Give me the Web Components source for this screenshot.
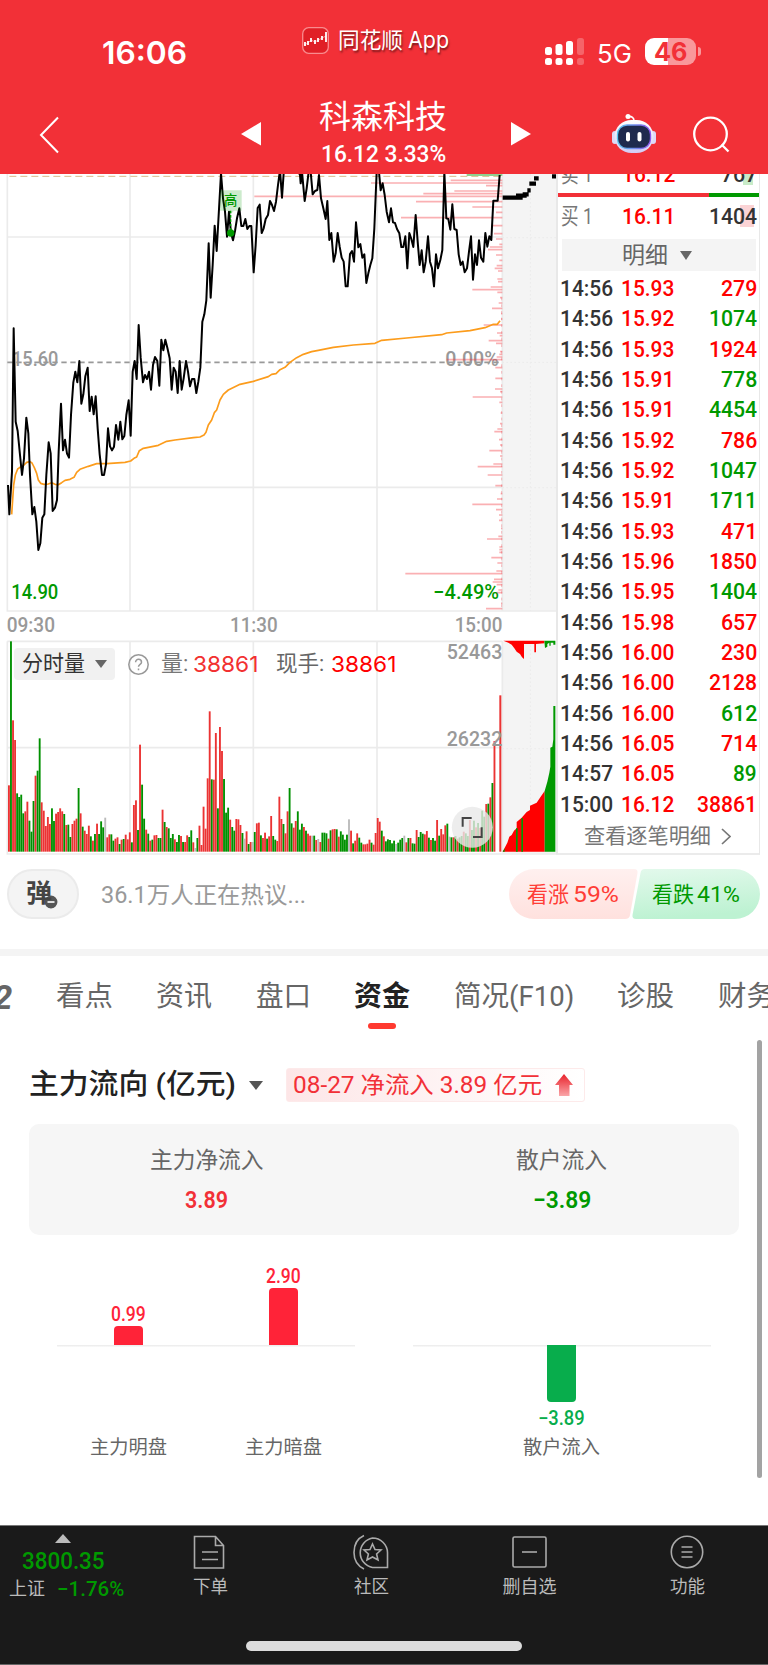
<!DOCTYPE html>
<html lang="zh-CN">
<head>
<meta charset="utf-8">
<title>科森科技</title>
<style>
  body {
    margin: 0;
    width: 768px;
    height: 1665px;
    overflow: hidden;
    background: #fff;
    color: #333;
    font-family: Roboto, "Noto Sans CJK SC", sans-serif;
    line-height: 1;
    --up: #ff0000;
    --down: #009900;
    --head: #f23037;
  }
</style>
</head>
<body>
<stock-page></stock-page>

<script>
class BaseElement extends HTMLElement {
    constructor() {
        super();
        this.attachShadow({ mode: 'open' });
        this.shadowRoot.innerHTML = this.template();
    }
}

// Text squeezed or stretched to the width given in "w"
class FitText extends BaseElement {
    template() {
        return `
        <style>
            :host { display: inline-block; flex: none; white-space: nowrap; }
            span { display: inline-block; transform-origin: 0 50%; }
        </style>
        <span><slot></slot></span>`;
    }
    connectedCallback() {
        let w = Number(this.getAttribute('w'));
        let span = this.shadowRoot.querySelector('span');
        this.style.width = w + 'px';
        span.style.transform = 'scaleX(' + w / span.offsetWidth + ')';
    }
}

class StatusBar extends BaseElement {
    template() {
        return `
        <style>
            :host { display: flex; height: 90px; color: #fff; font-family: Inter, "Noto Sans CJK SC", sans-serif; }
            .time { margin: 36.5px 0 0 102px; font-size: 31px; font-weight: 600; }
            .app { display: flex; margin: 27px 0 0 115px; text-shadow: 1px 2px 2px rgba(0,0,0,.5); font-size: 23px; }
            .app fit-text { margin-top: 2px; }
            .app .han { margin-left: 9px; font-size: 22px; }
            .app .lat { margin-left: 5px; }
            .sig { margin: 38px 0 0 96px; }
            .net { margin: 42px 0 0 13px; font-size: 25px; }
            .bat { margin: 38px 0 0 13px; width: 51px; height: 27px; border-radius: 9px; display: flex; justify-content: center; align-items: center;
                background: linear-gradient(90deg, #fff 23px, #f9989b 23px); color: var(--head); font-size: 26px; font-weight: 700; }
            .cap { width: 3px; height: 9px; margin: 47px 0 0 2px; border-radius: 0 3px 3px 0; background: #f9989b; }
        </style>
        <fit-text class="time" w="85">16:06</fit-text>
        <div class="app">
            <svg width="27" height="27" viewBox="0 0 27 27">
                <rect x=".7" y=".7" width="25.6" height="25.6" rx="6" fill="#e01f26" stroke="#f98b8e" stroke-width="1.3"/>
                <path d="M3 15v4M6 14v4M9 11v4M13 13v4M16 11v4M20 9v4M24 5v10" stroke="#fff" stroke-width="1.8"/>
                <path d="M2 18L6 16 9 13 13 15 20 11 24 9" fill="none" stroke="#fff" stroke-width=".5"/>
            </svg>
            <fit-text class="han" w="65">同花顺</fit-text><fit-text class="lat" w="41">App</fit-text>
        </div>
        <svg class="sig" width="39" height="28" fill="#fff">
            <rect x="0" y="9" width="7" height="8" rx="2.5"/><rect x="10.5" y="6" width="7" height="11" rx="2.5"/>
            <rect x="21" y="3" width="7" height="14" rx="2.5"/><rect x="32" y="0" width="7" height="17" rx="2.5" opacity=".25"/>
            <rect x="0" y="20" width="7" height="7" rx="2.5"/><rect x="10.5" y="20" width="7" height="7" rx="2.5"/>
            <rect x="21" y="20" width="7" height="7" rx="2.5"/><rect x="32" y="20" width="7" height="7" rx="2.5" opacity=".25"/>
        </svg>
        <fit-text class="net" w="35">5G</fit-text>
        <div class="bat"><fit-text w="33">46</fit-text></div><div class="cap"></div>`;
    }
}

class NavBar extends BaseElement {
    template() {
        return `
        <style>
            :host { display: flex; height: 84px; color: #fff; }
            svg { flex: none; }
            .title { display: flex; flex-direction: column; align-items: center; width: 130px; margin: 11px 0 0 57px; font-size: 32px; }
            .title .sub { font-size: 24.5px; font-weight: 500; margin-top: 9px; }
        </style>
        <svg width="20" height="38" style="margin: 26px 0 0 39px" fill="none" stroke="#fff" stroke-width="2"><path d="M19 1.500L2 19 19 36.500"/></svg>
        <svg width="20" height="24" style="margin: 32px 0 0 182px" fill="#fff"><path d="M20 0V23.500L0 12Z"/></svg>
        <div class="title"><fit-text w="128">科森科技</fit-text><fit-text class="sub" w="125">16.12 3.33%</fit-text></div>
        <svg width="20" height="24" style="margin: 32px 0 0 63px" fill="#fff"><path d="M0 0V23.500L20 12Z"/></svg>
        <svg width="44" height="42" viewBox="0 0 44 42" style="margin: 22px 0 0 81px">
            <defs>
                <linearGradient id="shell" x2="0" y2="1"><stop offset="0" stop-color="#fff"/><stop offset="1" stop-color="#d2cdf5"/></linearGradient>
                <linearGradient id="rim" x2="1"><stop offset="0" stop-color="#58c4ee"/><stop offset="1" stop-color="#8d58ee"/></linearGradient>
            </defs>
            <circle cx="16" cy="4.500" r="2.500" fill="#fff"/><path d="M16 4.500Q22 4 22 9" fill="none" stroke="#fff" stroke-width="1.700"/>
            <rect x="0" y="19" width="6" height="13" rx="3" fill="#dcd9f7"/><rect x="38" y="19" width="6" height="13" rx="3" fill="#dcd9f7"/>
            <rect x="2.500" y="8" width="39" height="33" rx="17" fill="url(#shell)"/>
            <rect x="5.500" y="13" width="33" height="23.500" rx="9.500" fill="#1f2a4e" stroke="url(#rim)" stroke-width="1.300"/>
            <rect x="14" y="20" width="4" height="9.500" rx="2" fill="#fff"/><rect x="25.500" y="20" width="4" height="9.500" rx="2" fill="#fff"/>
        </svg>
        <svg width="38" height="38" style="margin: 25px 0 0 36px" fill="none" stroke="#fff" stroke-width="2.300"><circle cx="18.500" cy="19" r="16.300"/><path d="M29.500 29.500L36.500 36.500"/></svg>`;
    }
}

// Minute line, three units per pixel
class PriceChart extends BaseElement {
    template() {
        let bars = [[46,632],[54,393],[62,738],[78,643],[86,550],[94,43],[110,528],[126,697],[142,768],[158,483],[182,754],[206,762],[222,768],[238,778],[246,750],[254,744],[270,768],[286,778],[302,770],[310,764],[318,774],[342,772],[350,774],[366,752],[374,697],[382,772],[398,780],[414,776],[430,756],[446,783],[462,783],[480,731],[504,771],[512,779],[527,746],[535,768],[560,780],[568,778],[576,770],[584,620],[608,766],[640,766],[672,765],[680,780],[696,698],[712,778],[744,782],[776,780],[792,772],[800,763],[824,777],[840,780],[857,748],[873,780],[897,760],[905,713],[930,743],[962,766],[986,782],[1002,771],[1018,697],[1034,768],[1050,777],[1066,777],[1090,783],[1114,775],[1122,741],[1146,778],[1154,778],[1162,778],[1178,754],[1194,772],[1218,769],[1226,496],[1243,762],[1251,758],[1259,770],[1275,775],[1283,770],[1315,783],[1331,738]];
        let lines = bars.map(b => `M${b[1]} ${b[0]}H787`).join('');
        return `
        <style>
            :host { display: block; height: 466px; }
            svg { display: block; }
            text { font: 500 62px Roboto, sans-serif; fill: #999; }
            .low { fill: var(--down); }
        </style>
        <svg width="558" height="466" viewBox="0 27 1674 1398">
            <rect x="1507" y="27" width="163" height="1311" fill="#f4f4f4"/>
            <g fill="none" stroke="#ebebeb" stroke-width="5">
                <path d="M22 27V1338H1670M390 27V1338M760 27V1338M1131 27V1338M22 216H1507M22 967H1507M1507 27V1338"/>
                <path d="M1591 27V1338M1507 218H1670M1507 592H1670M1507 968H1670" stroke-width="3" stroke-dasharray="5 7"/>
            </g>
            <path d="M1671 27V1425" stroke="#e8e8e8" stroke-width="6"/>
            <path d="M28 34H1507" stroke="#d9b98a" stroke-width="3" stroke-dasharray="21 12"/>
            <path d="M22 592H1507" stroke="#999" stroke-width="5" stroke-dasharray="16 11"/>
            <text x="36" y="602" textLength="139" lengthAdjust="spacingAndGlyphs">15.60</text>
            <text x="1336" y="602" textLength="160" lengthAdjust="spacingAndGlyphs">0.00%</text>
            <text class="low" x="34" y="1301" textLength="141" lengthAdjust="spacingAndGlyphs">14.90</text>
            <text class="low" x="1300" y="1301" textLength="197" lengthAdjust="spacingAndGlyphs">−4.49%</text>
            <text x="20" y="1402" textLength="145" lengthAdjust="spacingAndGlyphs">09:30</text>
            <text x="690" y="1402" textLength="143" lengthAdjust="spacingAndGlyphs">11:30</text>
            <text x="1364" y="1402" textLength="143" lengthAdjust="spacingAndGlyphs">15:00</text>
            <g fill="none" transform="translate(720 0)">
                <path d="${lines}" stroke="#f23037" stroke-opacity=".38" stroke-width="5"/>
                <path d="M785 398V1335" stroke="#f23037" stroke-opacity=".3" stroke-width="3" stroke-dasharray="8 12"/>
                <path d="M680 30H787" stroke="#8fd08f" stroke-width="6"/>
            </g>
            <g fill="none" stroke="#fc9c1c" stroke-width="5" stroke-linejoin="round">
                <path d="M35 1048L41 960 46 930 53 912 60 907 72 900 80 892 90 890 96 894 103 908 110 925 115 945 122 955 132 958 145 957 155 953 165 958 175 959 185 953 195 946 210 943 222 937 230 922 240 913 265 904 290 896 320 896 375 892 392 888 402 880 410 876 418 857 430 850 475 841 500 829 525 825 580 818 600 816 612 810 618 802 625 780 635 765 643 743 650 735 660 705 670 688 685 675 720 658 760 649 805 635 815 628 828 626 840 614 855 607 870 592 890 578 910 568 935 560 955 556 1000 547 1060 540 1125 535 1145 526 1220 519 1325 509 1340 504 1410 497 1455 488 1480 478 1492 478 1500 467"/>
            </g>
            <g fill="none" stroke="#000" stroke-width="6" stroke-linejoin="round">
                <path d="M24 960L28 1048 36 920 41 490 47 770 53 798 60 870 66 930 72 880 79 758 85 805 90 930 97 1048 103 1026 109 1070 115 1155 121 1135 127 1058 133 1048 139 930 146 832 152 865 158 1038 165 1028 171 1005 176 860 183 716 189 856 195 824 201 866 207 878 213 750 220 652 226 620 232 652 238 588 244 716 250 688 256 634 263 608 269 738 275 695 281 748 287 694 293 790 299 868 306 930 312 930 318 898 324 790 330 844 336 856 342 845 348 780 355 824 361 770 367 823 373 813 379 750 386 706 392 812 398 620 404 588 410 642 416 480 422 578 429 652 435 630 441 642 447 620 453 674 459 600 465 576 472 588 478 662 484 524 490 556 496 524 502 548 509 580 515 674 521 608 527 620 533 684 539 588 545 674 551 640 558 588 564 620 570 664 576 642 583 642 589 684 595 650 601 608 607 470 613 448 619 406 626 235 632 398 638 300 644 182 650 258 656 150 663 25 669 100 675 140 681 215 687 140 693 205 699 226 705 198 711 160 718 130 724 183 730 183 736 162 742 192 748 183 754 183 761 322 767 240 773 129 779 119 785 204 791 190 797 162 804 150 810 108 816 120 822 138 828 110 834 60 840 15 846 98 852 10"/>
                <path transform="translate(720 0)" d="M170 10L180 30 182 55 186 20 194 108 200 70 206 20 212 20 218 88 225 78 232 75 237 30 243 100 250 130 257 162 262 108 268 225 274 204 281 290 287 265 293 204 299 245 305 278 311 290 317 364 323 364 330 267 336 258 342 290 348 172 355 247 361 237 367 278 373 268 379 354 385 325 391 300 397 280 403 190 410 20M416 10L422 76 428 55 434 90 440 140 447 172 453 130 459 172 465 174 471 192 478 205 484 246 490 246 496 214 502 310 508 204 514 222 520 246 527 150 533 230 539 300 545 256 551 322 557 290 564 214 570 290 576 310 582 364 588 268 594 310 601 285 607 255 613 20 619 160 625 162 631 194 637 118 643 192 650 195 656 268 662 300 668 290 674 322 681 310 687 260 693 214 699 344 705 268 711 300 717 226 723 278 730 290 736 204 742 245 748 214 754 225 760 107 773 107 779 30"/>
            </g>
            <path transform="translate(720 0)" d="M788 98H848M828 92H860M848 88H866M862 76H872M868 56H888M882 40H896M936 34H948" stroke="#000" stroke-width="13" fill="none"/>
            <path d="M660 76H725V137H702L692 148 682 137H660Z" fill="#090" fill-opacity=".2"/>
            <path d="M692 137V200" stroke="#090" stroke-width="4" stroke-dasharray="8 5"/><circle cx="692" cy="204" r="11" fill="#090"/>
            <text x="672" y="119" textLength="40" lengthAdjust="spacingAndGlyphs" style="font:500 40px 'Noto Sans CJK SC',sans-serif;fill:#090">高</text>
        </svg>`;
    }
}

class VolumeChart extends BaseElement {
    template() {
        // top of every bar plus r, g or n (unchanged)
        let data = '556r124g361r420r580g591g584g640g634r605r662g695g603g527r512g415g607r632r678r651r672r625g663g641r636r625r634r642g675r674g711g672r662r656r564g640r680g692r702r677r709g722r702g671r702g664g682g653n712r703r703g722g716r712r732g719r717g704r718r697r727g615r601r690g434r554g656g689r701g722r719g706r705r714g714g629r666g681r685g714g702g718r726g705g708r726g726r706r711g691g727r744n714g677r735r620r686r535r334r538g539r399r625g381r453r537g638g623g659r681g692g657r658r675r699g716n694r732g726r726n696g670r668r706g714r698r716g709r648r708g719g723r590r657r672g700r634r564g670g683r663r634g689g671g681r692g701r707r707n707g720r717n726r698g698g700g716r691g688r687r688g710r694g704g719g704g658n692r730g722r700r713g728g733r733r731r719r728g734r699r654r665r692g709r724g718g720g730g722g732n728g719g714g707n727r714g714r730g731g690r711g696g701g703r693r713g720r714g722g660r707g687r703r676r671g710n712g712r708g716r712g708g695r700g708g660r690g662g682r669g684r632g650g612r611g592r549g423r';
        let color = { r: '#eb3333', g: '#009000', n: '#bbb' };
        let bars = data.match(/\d+[rgn]/g).map((d, i) => {
            let top = parseInt(d);
            return `<rect x="${(24 + i * 6.146).toFixed(1)}" y="${top}" width="5.600" height="${755 - top}" fill="${color[d.slice(-1)]}"/>`;
        }).join('');
        return `
        <style>
            :host { display: grid; width: 558px; height: 215px; }
            :host > * { grid-area: 1 / 1; }
            text { font: 500 62px Roboto, sans-serif; fill: #999; }
            .bar { display: flex; align-items: center; height: 32px; margin: 8px 0 0 14px; z-index: 1; font-size: 22px; color: #777; }
            .drop { display: flex; align-items: center; height: 32px; width: 101px; background: #f1f1f1; border-radius: 4px; color: #333; box-sizing: border-box; padding-left: 8px; }
            .drop i { margin-left: 10px; border: 6px solid transparent; border-top: 8px solid #666; border-bottom: 0; }
            .bar > svg { margin: 0 12px 0 13px; }
            .num { font-family: Inter, sans-serif; color: #f23030; margin-left: 5px; }
        </style>
        <svg width="558" height="215" viewBox="0 120 1674 645">
            <rect x="1507" y="124" width="163" height="638" fill="#f4f4f4"/>
            <g fill="none" stroke="#ebebeb" stroke-width="5">
                <path d="M22 124H1507M22 124V762H1674M390 124V755M760 124V755M1131 124V755M22 443H1507M1507 124V755"/>
                <path d="M1591 124V755M1507 446H1670" stroke-width="3" stroke-dasharray="5 7"/>
            </g>
            <path d="M1671 120V764" stroke="#e8e8e8" stroke-width="6"/>
            ${bars}
            <rect x="1498" y="286" width="6" height="469" fill="#eb3333"/>
            <g transform="translate(810 0)">
                <path d="M698 755L705 742 712 728 718 710 725 705 732 692 740 685 740 666 755 653 770 636 780 630 780 617 800 608 812 590 824 573 824 755Z" fill="red"/>
                <path d="M824 755V573L832 545 838 518 841 500V443L847 440 850 418V318H856V755ZM698 755L704 745V755ZM738 685H743V755H738ZM754 655H759V755H754Z" fill="#090"/>
                <path d="M700 122H823V130L798 132V157H793V132H762V177L756 172 750 162 740 155 733 145 725 134 715 128Z" fill="red"/>
                <path d="M823 122H856V134H850V128H842V137H838V128L832 132V140L825 144Z" fill="#090"/>
            </g>
            <text x="1340" y="177" textLength="167" lengthAdjust="spacingAndGlyphs">52463</text>
            <text x="1340" y="438" textLength="167" lengthAdjust="spacingAndGlyphs">26232</text>
            <circle cx="1417" cy="682" r="61.500" fill="#e8e8e8" fill-opacity=".8"/>
            <path d="M1388 680V654H1415M1419 711H1445V682" fill="none" stroke="#444" stroke-width="6"/>
        </svg>
        <div class="bar">
            <div class="drop"><fit-text w="63">分时量</fit-text><i></i></div>
            <svg width="21" height="21" fill="none" stroke="#999" stroke-width="1.500"><circle cx="10.500" cy="10.500" r="9.700"/>
                <path d="M7.600 8.200C7.600 4.300 13.500 4.500 13.500 8.200C13.500 10.500 10.500 10.300 10.500 12.800M10.500 14.500V16.200"/></svg>
            <fit-text w="27">量:</fit-text><fit-text class="num" w="65">38861</fit-text>
            <fit-text w="48" style="margin-left:18px;color:#666">现手:</fit-text><fit-text class="num" w="65" style="color:red;margin-left:7px">38861</fit-text>
        </div>`;
    }
}

class TradeRow extends BaseElement {
    template() {
        return `
        <style>
            :host { display: flex; align-items: center; height: 30.350px; font-size: 22.500px; font-weight: 500; color: #333; }
            .price { margin-left: 8px; color: var(--up); }
            .vol { margin-left: auto; color: var(--c); }
        </style>
        <fit-text w="53"><slot></slot></fit-text>
        <fit-text class="price" w="53"></fit-text><fit-text class="vol"></fit-text>`;
    }
    connectedCallback() {
        let price = this.shadowRoot.querySelector('.price');
        let vol = this.shadowRoot.querySelector('.vol');
        price.textContent = this.getAttribute('price');
        vol.textContent = this.getAttribute('vol');
        vol.setAttribute('w', vol.textContent.length * 12);
        this.style.setProperty('--c', this.hasAttribute('sell') ? 'var(--down)' : 'var(--up)');
        // widths depend on the texts filled in above
        this.shadowRoot.querySelectorAll('fit-text').forEach(f => f.connectedCallback && f.connectedCallback());
    }
}

class TradeList extends BaseElement {
    template() {
        let rows = `14:56 15.93 279 r,14:56 15.92 1074 g,14:56 15.93 1924 r,14:56 15.91 778 g,14:56 15.91 4454 g,14:56 15.92 786 r,14:56 15.92 1047 g,14:56 15.91 1711 g,14:56 15.93 471 r,14:56 15.96 1850 r,14:56 15.95 1404 g,14:56 15.98 657 r,14:56 16.00 230 r,14:56 16.00 2128 r,14:56 16.00 612 g,14:56 16.05 714 r,14:57 16.05 89 g,15:00 16.12 38861 r`.split(',').map(r => {
            let [time, price, vol, side] = r.split(' ');
            return `<trade-row price="${price}" vol="${vol}" ${side == 'g' ? 'sell' : ''}>${time}</trade-row>`;
        }).join('');
        return `
        <style>
            :host { display: flex; flex-direction: column; width: 202px; height: 681px; box-sizing: border-box; border-right: 1.500px solid #e8e8e8; border-bottom: 2px solid #ebebeb; }
            .q { display: flex; align-items: center; height: 24px; margin: 7px 2px 11px 2px; padding-left: 1px; font-size: 22.500px; font-weight: 500; flex: none; }
            .q .lab { color: #777; font-weight: 400; }
            .q .pr { color: var(--up); margin-left: 29px; }
            .q .n { margin-left: auto; }
            .cut { height: 19px; margin: 0 2px; align-items: flex-end; overflow: hidden; }
            .cut fit-text { margin-bottom: 8px; }
            .line { height: 4px; flex: none; background: linear-gradient(90deg, #f23037 75%, #090 75%); }
            .head { display: flex; align-items: center; justify-content: center; height: 32px; margin: 0 3px 2px 4px; padding-right: 4px; box-sizing: border-box; background: #f4f4f4; font-size: 23px; color: #666; flex: none; }
            .head i { margin-left: 12px; border: 6px solid transparent; border-top: 9px solid #666; border-bottom: 0; }
            .rows { padding: 0 2px 0 2px; }
            .more { display: flex; align-items: center; justify-content: center; flex: 1; font-size: 21px; color: #777; padding: 1px 12px 0 10px; }
        </style>
        <div class="q cut"><fit-text class="lab" w="32">卖 1</fit-text><fit-text class="pr" w="53">16.12</fit-text>
            <fit-text class="n" w="36" style="background:linear-gradient(#c8ebc8,#c8ebc8) 22px 0/10px 24px no-repeat">767</fit-text></div>
        <div class="line"></div>
        <div class="q"><fit-text class="lab" w="32">买 1</fit-text><fit-text class="pr" w="53">16.11</fit-text>
            <fit-text class="n" w="48" style="background:linear-gradient(#fbd3d5,#fbd3d5) 31px 0/14px 24px no-repeat">1404</fit-text></div>
        <div class="head"><fit-text w="46">明细</fit-text><i></i></div>
        <div class="rows">${rows}</div>
        <div class="more"><fit-text w="127">查看逐笔明细</fit-text><svg width="10" height="17" style="margin-left:10px" fill="none" stroke="#777" stroke-width="1.700"><path d="M1 1L9 8.500 1 16"/></svg></div>`;
    }
}

class CommentBar extends BaseElement {
    template() {
        return `
        <style>
            :host { display: flex; align-items: flex-start; height: 101px; box-sizing: border-box; padding: 14px 8px 0 7px; border-bottom: 7px solid #f4f4f4; color: #999; font-size: 23px; }
            .pill { display: flex; width: 72px; height: 50px; box-sizing: border-box; border: 2px solid #ebebeb; border-radius: 25px; background: #f4f4f4; color: #444; font-size: 25px; font-weight: 700; padding: 10px 0 0 17px; }
            .pill svg { margin: 13px 0 0 -9px; }
            .hint { margin: 15px auto 0 22px; }
            .vote { display: grid; width: 251px; height: 50px; font-size: 21.500px; }
            .vote > * { grid-area: 1 / 1; }
            .vote div { display: flex; align-items: center; padding-left: 18px; padding-top: 1px; }
        </style>
        <div class="pill"><fit-text w="26">弹</fit-text>
            <svg width="16" height="16"><circle cx="8" cy="8" r="7.200" fill="#555" stroke="#f4f4f4" stroke-width="1.500"/><path d="M4.500 8H11.500" stroke="#fff" stroke-width="1.600"/></svg></div>
        <fit-text class="hint" w="205">36.1万人正在热议...</fit-text>
        <div class="vote">
            <svg width="251" height="50">
                <defs>
                    <linearGradient id="r" x2="0" y2="1"><stop stop-color="#fff0ef"/><stop offset="1" stop-color="#ffe1de"/></linearGradient>
                    <linearGradient id="g" x2=".2" y2="1"><stop stop-color="#e3f9ec"/><stop offset="1" stop-color="#bdf2d2"/></linearGradient>
                </defs>
                <path d="M25 0H125Q129 0 128.500 4L121 46Q120.500 50 116 50H25A25 25 0 0 1 25 0Z" fill="url(#r)"/>
                <path d="M136 0H226A25 25 0 0 1 226 50H127Q123 50 123.500 46L131.500 4Q132 0 136 0Z" fill="url(#g)"/>
            </svg>
            <div><fit-text w="42" style="color:#ff3d36">看涨</fit-text><fit-text w="46" style="color:#ff3d36;margin-left:4px">59%</fit-text>
            <fit-text w="42" style="color:#090;margin-left:33px">看跌</fit-text><fit-text w="43" style="color:#090;margin-left:3px">41%</fit-text></div>
        </div>`;
    }
}

class TabBar extends BaseElement {
    template() {
        return `
        <style>
            :host { display: flex; height: 84px; box-sizing: border-box; padding-top: 27px; overflow: hidden; font-size: 28px; color: #666; }
            fit-text { margin-left: 43.500px; }
            .cut { margin-left: -7px; font-weight: 700; font-size: 33px; font-style: italic; margin-top: -2px; }
            .on { display: flex; flex-direction: column; align-items: center; color: #222; font-weight: 700; }
            .on i { width: 28px; height: 6px; margin-top: 12px; border-radius: 3px; background: #ff3a30; margin-left: 43.500px; }
        </style>
        <fit-text class="cut" w="19">2</fit-text>
        <fit-text w="57">看点</fit-text><fit-text w="56">资讯</fit-text><fit-text w="55">盘口</fit-text>
        <div class="on"><fit-text w="56">资金</fit-text><i></i></div>
        <fit-text w="120">简况(F10)</fit-text><fit-text w="57">诊股</fit-text><fit-text w="57">财务</fit-text>`;
    }
}

class FlowBar extends BaseElement {
    template() {
        return `
        <style>
            :host { display: grid; grid-template-rows: 79px 93px 24px; width: 90px; justify-items: center; color: #666; font-size: 19px; }
            div { display: flex; flex-direction: column; align-items: center; }
            .top { justify-content: flex-end; color: #ff2338; }
            .bottom { color: #08ad4c; }
            i { flex: none; width: 28.500px; height: var(--h); border-radius: 4px 4px 0 0; background: #ff2338; margin-top: 2px; }
            .bottom i { border-radius: 0 0 4px 4px; background: #08ad4c; margin: 0 0 7px; }
            .val { font-weight: 500; font-size: 19.500px; }
        </style>
        <div class="top"></div><div class="bottom"></div>
        <fit-text w="77"><slot></slot></fit-text>`;
    }
    connectedCallback() {
        let value = this.getAttribute('value');
        let down = value.startsWith('−');
        let box = this.shadowRoot.querySelector(down ? '.bottom' : '.top');
        let text = `<fit-text class="val" w="${down ? 47 : 35}">${value}</fit-text>`;
        box.innerHTML = down ? '<i></i>' + text : text + '<i></i>';
        this.style.setProperty('--h', this.getAttribute('size') + 'px');
        this.shadowRoot.lastElementChild.connectedCallback();
    }
}

class FundFlow extends BaseElement {
    template() {
        return `
        <style>
            :host { display: flex; flex-direction: column; height: 485px; padding: 0 29px; box-sizing: border-box; }
            .head { display: flex; align-items: center; height: 34px; margin-top: 28px; font-size: 28.500px; font-weight: 500; color: #222; }
            .head > i { margin: 0 23px 0 13px; border: 7px solid transparent; border-top: 9px solid #555; border-bottom: 0; }
            .head > fit-text { margin-top: 1px; }
            .tag { display: flex; align-items: center; width: 299px; height: 34px; box-sizing: border-box; padding-left: 6px; border: 1.500px solid #fdeaea; border-radius: 3px; background: linear-gradient(90deg, #fde6e7, #fff); color: #f23037; font-size: 23px; font-weight: 400; }
            .card { display: flex; height: 111px; margin-top: 22px; background: #f6f6f6; border-radius: 10px; font-size: 22.500px; color: #666; }
            .card div { width: 50%; display: flex; flex-direction: column; align-items: center; padding-top: 25px; }
            .card .v { font-size: 24px; font-weight: 600; margin-top: 16px; }
            .plots { display: flex; gap: 58px; padding: 0 28px; margin-top: 31px; }
            .plot { display: flex; justify-content: center; width: 297px; padding-right: 1px; background: linear-gradient(#eee, #eee) 0 79px/100% 1.500px no-repeat; }
            .two { justify-content: flex-start; gap: 65px; padding: 0 0 0 26.500px; width: 271.500px; }
        </style>
        <div class="head"><fit-text w="207">主力流向 (亿元)</fit-text><i></i>
            <div class="tag"><fit-text w="249">08-27 净流入 3.89 亿元</fit-text>
            <svg width="18" height="23" style="margin-left:13px"><defs><linearGradient id="a" x2="0" y2="1"><stop stop-color="#e8212a"/><stop offset="1" stop-color="#faa5a8"/></linearGradient></defs>
            <path d="M9 0L18 11H14.500V22H4V11H0Z" fill="url(#a)"/></svg></div></div>
        <div class="card">
            <div><fit-text w="114">主力净流入</fit-text><fit-text class="v" w="43" style="color:#f23037">3.89</fit-text></div>
            <div><fit-text w="91">散户流入</fit-text><fit-text class="v" w="58" style="color:#090">−3.89</fit-text></div>
        </div>
        <div class="plots">
            <div class="plot two"><flow-bar value="0.99" size="19">主力明盘</flow-bar><flow-bar value="2.90" size="57">主力暗盘</flow-bar></div>
            <div class="plot"><flow-bar value="−3.89" size="57">散户流入</flow-bar></div>
        </div>`;
    }
}

class BottomBar extends BaseElement {
    template() {
        return `
        <style>
            :host { display: flex; flex-direction: column; height: 140px; background: #1a1a1a; box-sizing: border-box; border-top: 1px solid #777; border-bottom: 1px solid #666; color: #bbb; font-size: 18px; }
            .items { display: flex; height: 115px; }
            .idx { width: 126px; display: flex; flex-direction: column; align-items: center; color: #090; font-size: 24px; font-weight: 500; }
            .idx i { border: 8px solid transparent; border-bottom: 9px solid #bbb; border-top: 0; margin-top: 8px; }
            .idx p { display: flex; margin: 6px 0 0 7px; gap: 12px; align-items: center; font-size: 20.500px; }
            .it { display: flex; flex-direction: column; align-items: center; width: 160px; padding-top: 8px; gap: 8px; }
            .home { width: 276px; height: 10px; border-radius: 5px; background: #dcdcdc; align-self: center; }
            svg { fill: none; stroke: #aaa; stroke-width: 1.600; }
        </style>
        <div class="items">
            <div class="idx"><i></i><fit-text w="83" style="margin-top:6px">3800.35</fit-text>
                <p><fit-text w="36" style="color:#bbb;font-size:18px;font-weight:400">上证</fit-text><fit-text w="67">−1.76%</fit-text></p></div>
            <div class="it" style="margin-left:4px">
                <svg width="36" height="36"><path d="M2.500 2.500H23.500L31.500 11.500V34H2.500ZM23.500 2.500V11.500H31.500M10 18H26M10 25.500H26"/></svg><fit-text w="35">下单</fit-text></div>
            <div class="it" style="width:162px">
                <svg width="38" height="36"><path d="M20.500 4A15 15 0 0 0 20.500 33.500H35.500V18.500A15 15 0 0 0 20.500 4ZM12 1.500Q2 6 2 18.500Q2 30 12 35"/><path d="M20.500 10L23 15.500 29 16 24.600 20 26 26 20.500 23 15 26 16.400 20 12 16 18 15.500Z"/></svg><fit-text w="35">社区</fit-text></div>
            <div class="it" style="width:155px">
                <svg width="36" height="36"><rect x="1" y="3" width="33" height="30" rx="1.500"/><path d="M10 18H25"/></svg><fit-text w="54">删自选</fit-text></div>
            <div class="it">
                <svg width="36" height="36"><circle cx="18" cy="18" r="15.700"/><path d="M12.500 13H23.500M12.500 18H23.500M12.500 23H23.500"/></svg><fit-text w="35">功能</fit-text></div>
        </div>
        <div class="home"></div>`;
    }
}

class StockPage extends BaseElement {
    template() {
        return `
        <style>
            :host { display: flex; flex-direction: column; height: 1665px; position: relative; }
            header { height: 174px; background: var(--head); }
            main { display: flex; height: 681px; }
            .scroll { position: absolute; left: 757px; top: 1040px; width: 5px; height: 438px; border-radius: 3px; background: #a3a3a3; }
        </style>
        <header><status-bar></status-bar><nav-bar></nav-bar></header>
        <main><section><price-chart></price-chart><volume-chart></volume-chart></section><trade-list></trade-list></main>
        <comment-bar></comment-bar>
        <tab-bar></tab-bar>
        <fund-flow></fund-flow>
        <bottom-bar></bottom-bar>
        <div class="scroll"></div>`;
    }
}

window.customElements.define('fit-text', FitText);
window.customElements.define('status-bar', StatusBar);
window.customElements.define('nav-bar', NavBar);
window.customElements.define('price-chart', PriceChart);
window.customElements.define('volume-chart', VolumeChart);
window.customElements.define('trade-row', TradeRow);
window.customElements.define('trade-list', TradeList);
window.customElements.define('comment-bar', CommentBar);
window.customElements.define('tab-bar', TabBar);
window.customElements.define('flow-bar', FlowBar);
window.customElements.define('fund-flow', FundFlow);
window.customElements.define('bottom-bar', BottomBar);
window.customElements.define('stock-page', StockPage);
</script>
</body>
</html>
